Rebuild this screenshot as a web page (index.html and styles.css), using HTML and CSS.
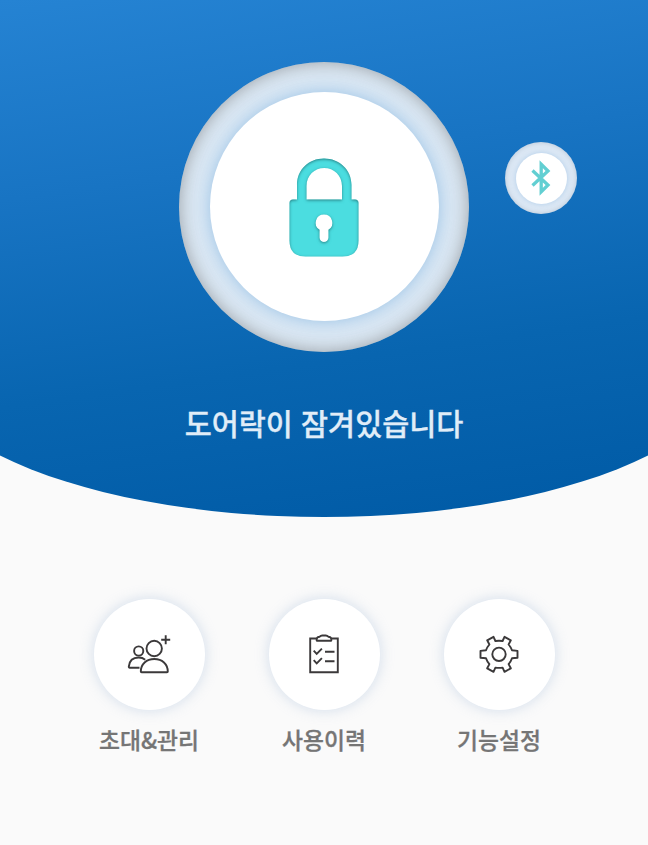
FILE: index.html
```
<!DOCTYPE html>
<html lang="ko">
<head>
  <meta charset="UTF-8" />
  <meta name="viewport" content="width=device-width, initial-scale=1.0" />
  <title>도어락</title>
  <link rel="stylesheet" href="styles.css">
</head>
<body>
  <header class="hero">
    <button class="lock-button" aria-label="도어락">
      <span class="lock-inner">
        <svg class="lock-icon" width="70" height="100" viewBox="0 0 70 100">
          <defs>
            <filter id="innerShade" x="-5%" y="-5%" width="110%" height="110%">
              <feComponentTransfer in="SourceAlpha" result="inverse">
                <feFuncA type="table" tableValues="1 0" />
              </feComponentTransfer>
              <feGaussianBlur in="inverse" stdDeviation="1.8" />
              <feOffset dx="0" dy="1" result="blur" />
              <feFlood flood-color="#104448" flood-opacity="0.85" />
              <feComposite in2="blur" operator="in" />
              <feComposite in2="SourceAlpha" operator="in" result="shade" />
              <feMerge>
                <feMergeNode in="SourceGraphic" />
                <feMergeNode in="shade" />
              </feMerge>
            </filter>
          </defs>
          <path filter="url(#innerShade)" fill="#4bdde0" fill-rule="evenodd" d="M8 42V28C8 12.500 20 1.500 35 1.500S62.500 12.500 62.500 28v14.500H66q3.500 0 3.500 3.500V83.500q0 16-16 16h-37Q.5 99.500 .5 83.500V46Q.5 42.500 4 42.500h4zM17.500 42.500h35.500V29C53 18.500 45 11 35.200 11S17.500 18.500 17.500 29zM35 57.500a8.300 8.300 0 0 0-4.500 15.300V80.500a4.500 4.500 0 0 0 9 0v-7.700A8.300 8.300 0 0 0 35 57.500z" />
        </svg>
      </span>
    </button>
    <div class="bluetooth">
      <span class="bluetooth-inner">
        <svg width="20" height="36" viewBox="0 0 20 36" fill="none" stroke="#62cfd2" stroke-width="3.300">
          <path d="M1.500 10.500L17 25L10.200 31.800V4.200L17 11L1.500 25.500" />
        </svg>
      </span>
    </div>
    <h1 class="status">도어락이 잠겨있습니다</h1>
  </header>

  <nav class="menu">
    <a class="menu-item">
      <span class="menu-circle">
        <svg width="46" height="42" viewBox="0 0 46 42" fill="none" stroke="#3b393a" stroke-width="1.900" stroke-linejoin="round">
          <circle cx="12.700" cy="17" r="4.600" />
          <circle cx="28.200" cy="14.500" r="7.700" />
          <path d="M14.800 37.500C14.800 30 20.500 25 28.300 25s13.500 5 13.500 12.500q0 .8-.8.800H15.600q-.8 0-.8-.8z" />
          <path d="M13.500 33.700H3.700q-1 0-.9-1C3.300 27 7 23.500 12.700 23.500q3.800 0 6.500 2.200" />
          <path d="M39.700 1.200v9M35.200 5.700h9" />
        </svg>
      </span>
      <span class="menu-label">초대&amp;관리</span>
    </a>
    <a class="menu-item">
      <span class="menu-circle">
        <svg width="46" height="42" viewBox="0 0 46 42" fill="none" stroke="#3b393a" stroke-width="1.900">
          <path d="M16 4.500H9.200v33.700h27.600V4.500H30" />
          <path d="M15.700 6.700c-.4-2.800 1-4 3-4q1-1.200 2.500-1.200h3.600q1.500 0 2.500 1.200c2 0 3.400 1.200 3 4z" stroke-linejoin="round" />
          <path d="M12.700 16.700l3 3.200 5.200-5.200M12.700 26.200l3 3.200 5.200-5.200M24 17.700h9.500M24 27.200h9.500" />
        </svg>
      </span>
      <span class="menu-label">사용이력</span>
    </a>
    <a class="menu-item">
      <span class="menu-circle">
        <svg width="46" height="42" viewBox="0 0 46 42" fill="none" stroke="#3b393a" stroke-width="1.900" stroke-linejoin="round">
          <circle cx="23" cy="20.300" r="6.700" />
          <path d="M19.400 7Q23 6.400 26.600 7L28.500 2.800 34.800 6.300 32.600 10.500Q35.100 13.400 36 16.300L41.500 16.900V23.700L36 24.300Q35.100 27.200 32.600 30.100L34.800 34.300 28.500 37.800 26.600 33.600Q23 34.200 19.400 33.600L17.500 37.800 11.200 34.300 13.400 30.100Q10.900 27.200 10 24.300L4.500 23.700V16.900L10 16.300Q10.900 13.400 13.400 10.500L11.200 6.300 17.500 2.800z" />
        </svg>
      </span>
      <span class="menu-label">기능설정</span>
    </a>
  </nav>
</body>
</html>
```
FILE: styles.css
```
body {
  margin: 0;
  background: #fafafa;
  font-family: "Noto Sans CJK KR", sans-serif;
}
.hero {
  position: relative;
  box-sizing: border-box;
  height: 517px;
  padding-top: 61.5px;
  display: flex;
  flex-direction: column;
  align-items: center;
  background: linear-gradient(172deg, #2583d3 0%, #1874c3 33%, #0865b0 67%, #005aa5 100%);
  clip-path: path("M0 0H648V455.500A410 159 0 0 1 0 455.500z");
}
.lock-button {
  display: flex;
  align-items: center;
  justify-content: center;
  width: 290px;
  height: 290px;
  padding: 0;
  border: 0;
  border-radius: 50%;
  background: #dce9f5;
  box-shadow: inset 0 0 18px rgba(95, 95, 95, 0.55);
}
.lock-inner {
  display: flex;
  align-items: center;
  justify-content: center;
  width: 229px;
  height: 229px;
  border-radius: 50%;
  background: #fff;
  box-shadow: 0 0 18px rgba(135, 182, 224, 0.8);
}
.bluetooth {
  position: absolute;
  top: 142px;
  left: 505px;
  display: flex;
  align-items: center;
  justify-content: center;
  width: 72px;
  height: 72px;
  border-radius: 50%;
  background: #dce8f5;
  box-shadow: inset 0 0 5px rgba(110, 125, 145, 0.35);
}
.bluetooth-inner {
  display: flex;
  align-items: center;
  justify-content: center;
  width: 51px;
  height: 51px;
  border-radius: 50%;
  background: #fff;
  box-shadow: 0 0 5px rgba(135, 182, 224, 0.5);
}
.status {
  margin: 48px 0 0;
  color: #e0edf8;
  font-size: 29.4px;
  font-weight: 500;
  line-height: 44px;
  white-space: nowrap;
  -webkit-text-stroke: 0.3px #e0edf8;
}
.menu {
  display: flex;
  justify-content: center;
  gap: 64px;
  padding-top: 82px;
}
.menu-item {
  display: flex;
  flex-direction: column;
  align-items: center;
  width: 111px;
}
.menu-circle {
  display: flex;
  align-items: center;
  justify-content: center;
  width: 111px;
  height: 111px;
  border-radius: 50%;
  background: #fff;
  box-shadow: 0 0 14px rgba(160, 185, 215, 0.45);
}
.menu-label {
  margin-top: 13px;
  color: #757575;
  font-size: 22.8px;
  font-weight: 500;
  line-height: 34px;
  white-space: nowrap;
  -webkit-text-stroke: 0.3px #757575;
}
```
